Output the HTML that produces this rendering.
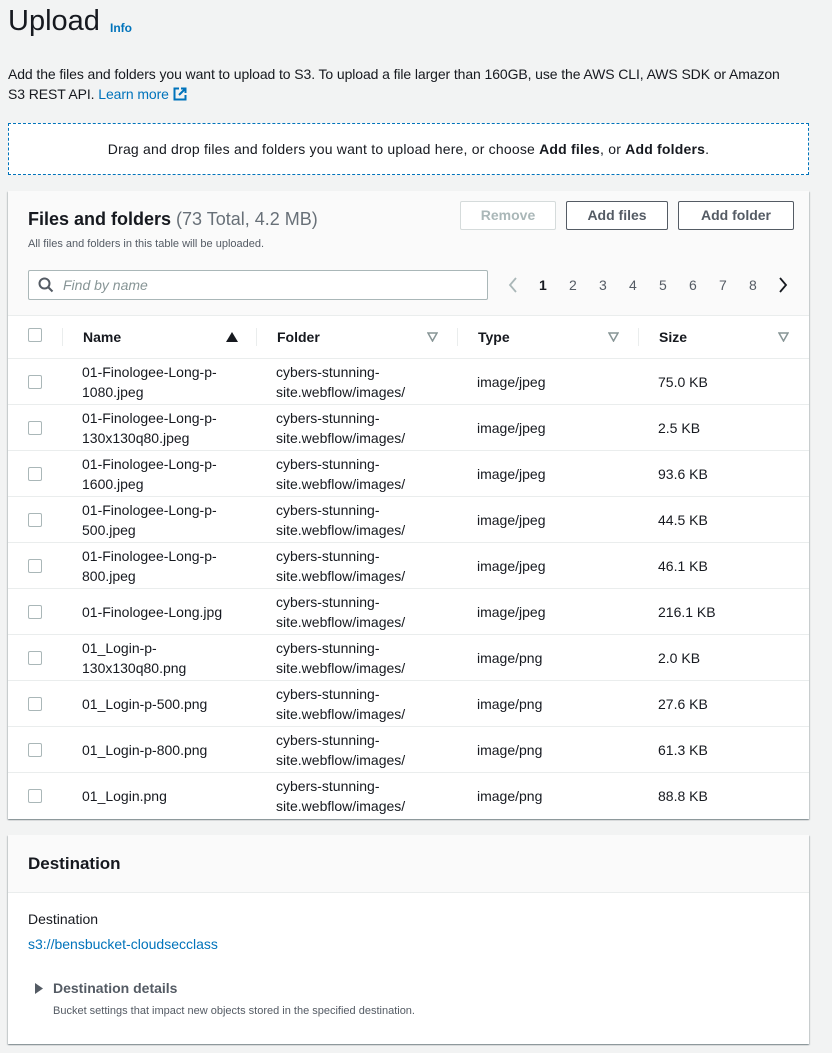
<!DOCTYPE html>
<html><head><meta charset="utf-8"><style>
*{box-sizing:border-box;margin:0;padding:0}
body{width:832px;height:1053px;background:#f2f3f3;font-family:"Liberation Sans",sans-serif;color:#16191f;position:relative;overflow:hidden}
.a{position:absolute;white-space:nowrap}
.box{position:absolute;left:8px;width:801px;background:#fff;box-shadow:0 1px 1px rgba(0,28,36,.3),1px 1px 1px rgba(0,28,36,.15),-1px 1px 1px rgba(0,28,36,.15)}
.btn{position:absolute;top:10px;height:29px;border:1px solid #545b64;border-radius:2px;background:#fff;font-weight:bold;font-size:14px;color:#545b64;text-align:center;line-height:27px}
.row{position:absolute;left:0;width:801px;height:46px;border-top:1px solid #eaeded;font-size:14px;line-height:20px}
.cb{position:absolute;left:20px;width:14px;height:14px;border:1px solid #aab7b8;border-radius:2px;background:#fff}
.row .cb{top:16px}
.c{position:absolute;top:3px}
.sep{position:absolute;top:12px;width:1px;height:18px;background:#eaeded}
.tri{position:absolute;top:14px;font-size:13px;color:#879596}
</style></head><body>
<div class="a" style="left:8px;top:5px;font-size:29px;color:#16191f">Upload</div>
<div class="a" style="left:110px;top:21px;font-size:12px;font-weight:bold;color:#0073bb">Info</div>
<div class="a" style="left:8px;top:64px;font-size:14px;line-height:20px;white-space:normal;width:800px;letter-spacing:-0.1px">Add the files and folders you want to upload to S3. To upload a file larger than 160GB, use the AWS CLI, AWS SDK or Amazon S3&nbsp;REST API. <span style="color:#0073bb">Learn more <svg width="14" height="14" viewBox="0 0 14 14" style="vertical-align:-2px"><path d="M6 1.5H1.5v11h11V8M8 1.5h4.5V6M12.5 1.5L6 8" fill="none" stroke="#0073bb" stroke-width="2"/></svg></span></div>
<div class="a" style="left:8px;top:123px;width:801px;height:52px;border:1px dashed #0073bb;background:#fff;font-size:14px;text-align:center;line-height:50px;letter-spacing:0.2px">Drag and drop files and folders you want to upload here, or choose <b>Add files</b>, or <b>Add folders</b>.</div>

<div class="box" style="top:191px;height:628px">
 <div class="a" style="left:0;top:0;width:801px;height:125px;background:#fafafa"></div>
 <div class="a" style="left:20px;top:18px;font-size:18px;font-weight:bold">Files and folders <span style="font-weight:normal;color:#687078">(73 Total, 4.2 MB)</span></div>
 <div class="a" style="left:20px;top:47px;font-size:11px;color:#545b64">All files and folders in this table will be uploaded.</div>
 <div class="btn" style="left:452px;width:96px;border-color:#d5dbdb;color:#aab7b8">Remove</div>
 <div class="btn" style="left:558px;width:102px">Add files</div>
 <div class="btn" style="left:670px;width:116px">Add folder</div>
 <div class="a" style="left:20px;top:79px;width:460px;height:30px;border:1px solid #aab7b8;border-radius:2px;background:#fff"></div>
 <svg class="a" style="left:30px;top:86px" width="16" height="16" viewBox="0 0 16 16"><circle cx="6.5" cy="6.5" r="5" fill="none" stroke="#545b64" stroke-width="2"/><path d="M10 10l4.5 4.5" stroke="#545b64" stroke-width="2"/></svg>
 <div class="a" style="left:55px;top:86px;font-size:14px;font-style:italic;color:#879596">Find by name</div>
 <svg class="a" style="left:500px;top:86px" width="10" height="16" viewBox="0 0 10 16"><path d="M8 1L2 8l6 7" fill="none" stroke="#aab7b8" stroke-width="1.8"/></svg>
 <div class="a" style="left:531px;top:86px;font-size:14px"><b>1</b></div>
 <div class="a" style="left:561px;top:86px;font-size:14px;color:#545b64">2</div>
 <div class="a" style="left:591px;top:86px;font-size:14px;color:#545b64">3</div>
 <div class="a" style="left:621px;top:86px;font-size:14px;color:#545b64">4</div>
 <div class="a" style="left:651px;top:86px;font-size:14px;color:#545b64">5</div>
 <div class="a" style="left:681px;top:86px;font-size:14px;color:#545b64">6</div>
 <div class="a" style="left:711px;top:86px;font-size:14px;color:#545b64">7</div>
 <div class="a" style="left:741px;top:86px;font-size:14px;color:#545b64">8</div>
 <svg class="a" style="left:770px;top:86px" width="10" height="16" viewBox="0 0 10 16"><path d="M2 1l6 7-6 7" fill="none" stroke="#16191f" stroke-width="1.8"/></svg>
 <div class="a" style="left:0;top:124px;width:801px;height:1px;background:#eaeded"></div>
 <div class="a" style="left:0;top:125px;width:801px;height:42px;font-size:14px;font-weight:bold;color:#16191f">
  <div class="cb" style="top:12px"></div>
  <div class="sep" style="left:54px"></div>
  <div class="a" style="left:75px;top:13px">Name</div>
  <svg class="a" style="left:218px;top:16px" width="12" height="10" viewBox="0 0 12 10"><path d="M6 0L12 10H0z" fill="#16191f"/></svg>
  <div class="sep" style="left:248px"></div>
  <div class="a" style="left:269px;top:13px">Folder</div>
  <svg class="a" style="left:419px;top:16px" width="11" height="10" viewBox="0 0 11 10"><path d="M1 1h9L5.5 9z" fill="none" stroke="#879596" stroke-width="1.5"/></svg>
  <div class="sep" style="left:449px"></div>
  <div class="a" style="left:470px;top:13px">Type</div>
  <svg class="a" style="left:600px;top:16px" width="11" height="10" viewBox="0 0 11 10"><path d="M1 1h9L5.5 9z" fill="none" stroke="#879596" stroke-width="1.5"/></svg>
  <div class="sep" style="left:630px"></div>
  <div class="a" style="left:651px;top:13px">Size</div>
  <svg class="a" style="left:770px;top:16px" width="11" height="10" viewBox="0 0 11 10"><path d="M1 1h9L5.5 9z" fill="none" stroke="#879596" stroke-width="1.5"/></svg>
 </div>
 <div class="row" style="top:167px"><div class="cb"></div><div class="c" style="left:74px">01-Finologee-Long-p-<br>1080.jpeg</div><div class="c" style="left:268px">cybers-stunning-<br>site.webflow/images/</div><div class="c" style="left:469px;top:13px">image/jpeg</div><div class="c" style="left:650px;top:13px">75.0 KB</div></div>
 <div class="row" style="top:213px"><div class="cb"></div><div class="c" style="left:74px">01-Finologee-Long-p-<br>130x130q80.jpeg</div><div class="c" style="left:268px">cybers-stunning-<br>site.webflow/images/</div><div class="c" style="left:469px;top:13px">image/jpeg</div><div class="c" style="left:650px;top:13px">2.5 KB</div></div>
 <div class="row" style="top:259px"><div class="cb"></div><div class="c" style="left:74px">01-Finologee-Long-p-<br>1600.jpeg</div><div class="c" style="left:268px">cybers-stunning-<br>site.webflow/images/</div><div class="c" style="left:469px;top:13px">image/jpeg</div><div class="c" style="left:650px;top:13px">93.6 KB</div></div>
 <div class="row" style="top:305px"><div class="cb"></div><div class="c" style="left:74px">01-Finologee-Long-p-<br>500.jpeg</div><div class="c" style="left:268px">cybers-stunning-<br>site.webflow/images/</div><div class="c" style="left:469px;top:13px">image/jpeg</div><div class="c" style="left:650px;top:13px">44.5 KB</div></div>
 <div class="row" style="top:351px"><div class="cb"></div><div class="c" style="left:74px">01-Finologee-Long-p-<br>800.jpeg</div><div class="c" style="left:268px">cybers-stunning-<br>site.webflow/images/</div><div class="c" style="left:469px;top:13px">image/jpeg</div><div class="c" style="left:650px;top:13px">46.1 KB</div></div>
 <div class="row" style="top:397px"><div class="cb"></div><div class="c" style="left:74px;top:13px">01-Finologee-Long.jpg</div><div class="c" style="left:268px">cybers-stunning-<br>site.webflow/images/</div><div class="c" style="left:469px;top:13px">image/jpeg</div><div class="c" style="left:650px;top:13px">216.1 KB</div></div>
 <div class="row" style="top:443px"><div class="cb"></div><div class="c" style="left:74px">01_Login-p-<br>130x130q80.png</div><div class="c" style="left:268px">cybers-stunning-<br>site.webflow/images/</div><div class="c" style="left:469px;top:13px">image/png</div><div class="c" style="left:650px;top:13px">2.0 KB</div></div>
 <div class="row" style="top:489px"><div class="cb"></div><div class="c" style="left:74px;top:13px">01_Login-p-500.png</div><div class="c" style="left:268px">cybers-stunning-<br>site.webflow/images/</div><div class="c" style="left:469px;top:13px">image/png</div><div class="c" style="left:650px;top:13px">27.6 KB</div></div>
 <div class="row" style="top:535px"><div class="cb"></div><div class="c" style="left:74px;top:13px">01_Login-p-800.png</div><div class="c" style="left:268px">cybers-stunning-<br>site.webflow/images/</div><div class="c" style="left:469px;top:13px">image/png</div><div class="c" style="left:650px;top:13px">61.3 KB</div></div>
 <div class="row" style="top:581px"><div class="cb"></div><div class="c" style="left:74px;top:13px">01_Login.png</div><div class="c" style="left:268px">cybers-stunning-<br>site.webflow/images/</div><div class="c" style="left:469px;top:13px">image/png</div><div class="c" style="left:650px;top:13px">88.8 KB</div></div>
</div>

<div class="box" style="top:835px;height:209px">
 <div class="a" style="left:0;top:0;width:801px;height:58px;background:#fafafa;border-bottom:1px solid #eaeded"></div>
 <div class="a" style="left:20px;top:19px;font-size:17px;font-weight:bold">Destination</div>
 <div class="a" style="left:20px;top:76px;font-size:14px">Destination</div>
 <div class="a" style="left:20px;top:101px;font-size:14px;color:#0073bb">s3://bensbucket-cloudsecclass</div>
 <svg class="a" style="left:27px;top:148px" width="8" height="11" viewBox="0 0 8 11"><path d="M0 0L8 5.5 0 11z" fill="#545b64"/></svg>
 <div class="a" style="left:45px;top:145px;font-size:14px;font-weight:bold;color:#545b64">Destination details</div>
 <div class="a" style="left:45px;top:170px;font-size:11px;color:#545b64">Bucket settings that impact new objects stored in the specified destination.</div>
</div>
</body></html>
